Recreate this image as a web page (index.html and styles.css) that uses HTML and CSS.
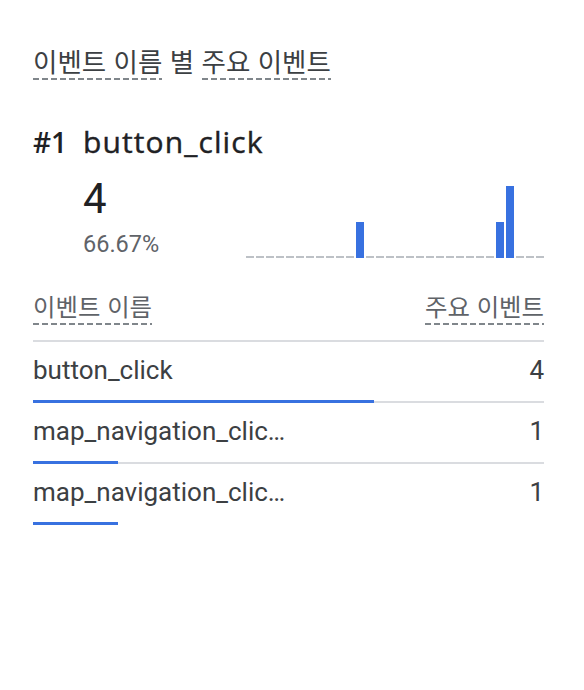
FILE: index.html
```html
<!DOCTYPE html>
<html lang="ko">
<head>
<meta charset="utf-8">
<link rel="stylesheet" href="styles.css">
</head>
<body>
<div class="card">
  <div class="title"><span class="dash">이벤트 이름</span> 별 <span class="dash">주요 이벤트</span></div>

  <div class="top">
    <div class="rank">#1</div>
    <div class="top-main">
      <div class="name">button_click</div>
      <div class="stats">
        <div class="nums">
          <div class="value">4</div>
          <div class="pct">66.67%</div>
        </div>
        <div class="spark">
          <i></i><i></i><i></i><i></i><i></i><i></i><i></i><i></i><i></i><i></i>
          <i></i><b style="height:36px"></b><i></i><i></i><i></i><i></i><i></i><i></i><i></i><i></i>
          <i></i><i></i><i></i><i></i><i></i><b style="height:36px"></b><b style="height:72px"></b><i></i><i></i><i></i>
        </div>
      </div>
    </div>
  </div>

  <div class="table">
    <div class="thead">
      <span class="dash">이벤트 이름</span>
      <span class="dash">주요 이벤트</span>
    </div>
    <div class="row">
      <span class="cell-name">button_click</span>
      <span class="cell-val">4</span>
      <div class="track"><div class="fill" style="width:66.67%"></div></div>
    </div>
    <div class="row">
      <span class="cell-name">map_navigation_clic…</span>
      <span class="cell-val">1</span>
      <div class="track"><div class="fill" style="width:16.67%"></div></div>
    </div>
    <div class="row last">
      <span class="cell-name">map_navigation_clic…</span>
      <span class="cell-val">1</span>
      <div class="track"><div class="fill" style="width:16.67%"></div></div>
    </div>
  </div>
</div>
</body>
</html>
```
FILE: styles.css
```css
html, body {
  margin: 0;
  padding: 0;
  background: #ffffff;
}

.card {
  width: 511px;
  padding: 43px 40px 0 33px;
  font-family: Roboto, "Noto Sans CJK KR", sans-serif;
}

.dash {
  background-image: linear-gradient(to right, #80868b 6px, transparent 6px);
  background-size: 9px 2px;
  background-repeat: repeat-x;
  background-position: left bottom;
}

.title {
  font-family: "Noto Sans CJK KR", sans-serif;
  font-size: 26.5px;
  line-height: 36px;
  color: #3c4043;
}

.top {
  display: flex;
  margin-top: 45px;
}

.rank {
  width: 50px;
  flex: none;
  font-family: "Open Sans", sans-serif;
  font-weight: 600;
  font-size: 28px;
  line-height: 36px;
  color: #202124;
}

.top-main {
  flex: 1;
}

.name {
  font-family: "Open Sans", sans-serif;
  font-weight: 500;
  font-size: 30px;
  line-height: 36px;
  letter-spacing: 1.1px;
  color: #202124;
  -webkit-text-stroke: 0.4px #202124;
}

.stats {
  display: flex;
  justify-content: space-between;
  align-items: flex-end;
}

.nums {
  padding-top: 15px;
}

.value {
  font-size: 42px;
  line-height: 48px;
  color: #202124;
}

.pct {
  margin-top: 7px;
  font-size: 23.5px;
  line-height: 28px;
  color: #5f6368;
}

.spark {
  display: flex;
  align-items: flex-end;
  gap: 2px;
  height: 72px;
}

.spark i {
  width: 8px;
  height: 2px;
  background: #bdc1c6;
}

.spark b {
  width: 8px;
  background: #3871e0;
}

.table {
  margin-top: 32px;
}

.thead {
  display: flex;
  justify-content: space-between;
  align-items: flex-start;
  font-family: "Noto Sans CJK KR", sans-serif;
  font-size: 24.4px;
  line-height: 32px;
  color: #5f6368;
  padding-bottom: 15px;
  border-bottom: 2px solid #dadce0;
}

.thead .dash {
  padding-bottom: 3px;
}

.row {
  display: grid;
  grid-template-columns: 1fr auto;
  padding-top: 13px;
  font-size: 26px;
  line-height: 30px;
  color: #3c4043;
}

.cell-val {
  text-align: right;
}

.track {
  grid-column: 1 / -1;
  margin-top: 15px;
  height: 3px;
  background: linear-gradient(#dadce0, #dadce0) left bottom / 100% 2px no-repeat;
}

.row.last .track {
  background: none;
}

.fill {
  height: 3px;
  background: #3871e0;
}
```
